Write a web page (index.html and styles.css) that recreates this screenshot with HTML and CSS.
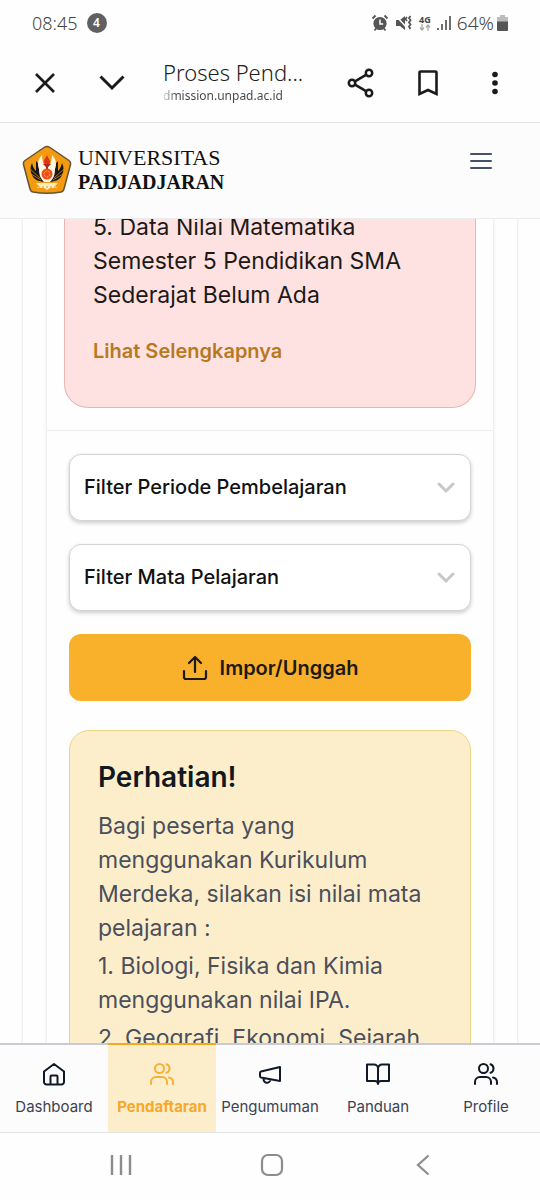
FILE: index.html
```html
<!DOCTYPE html>
<html lang="id">
<head>
    <meta charset="UTF-8">
    <meta name="viewport" content="width=device-width, initial-scale=1.0">
    <title>Proses Pendaftaran</title>
    <link rel="stylesheet" href="styles.css">
</head>
<body>
    <div class="phone">
        <div class="status-bar">
            <span class="clock">08:45</span>
            <span class="count">4</span>
            <div class="status-icons">
                <svg width="18" height="18" viewBox="0 0 18 18">
                    <circle cx="9" cy="9.5" r="6.6" fill="#555"/>
                    <path d="M9 5.5v4.5h3.2" fill="none" stroke="#fff" stroke-width="1.5"/>
                    <path d="M1.5 4.5l3-3M16.5 4.5l-3-3M3.5 16.5l1.5-2M14.5 16.5l-1.5-2" stroke="#555" stroke-width="1.8"/>
                </svg>
                <svg width="18" height="18" viewBox="0 0 18 18">
                    <path d="M1 6h4l5-4v14l-5-4H1z" fill="#555"/>
                    <path d="M1 2l13 14" stroke="#fff" stroke-width="1.5"/>
                    <path d="M12 3l-1.5 2 1.5 2M15.500 2l-1.500 2 1.500 2-1.500 2.500 1.500 2-1.500 2 1.500 2.500" fill="none" stroke="#555" stroke-width="1.8"/>
                </svg>
                <span class="network">
                    <span>4G</span>
                    <svg width="12" height="7" viewBox="0 0 12 7" fill="none" stroke="#aaa" stroke-width="1.3">
                        <path d="M3 0v6M1 3.500l2 2.500 2-2.500M9 7V1M7 3.500L9 1l2 2.500"/>
                    </svg>
                </span>
                <svg width="14" height="16" viewBox="0 0 14 16" stroke="#555" stroke-width="1.7">
                    <path d="M1 13v2M5 9v6M9 5v10M13 1v14"/>
                </svg>
                <span class="battery">
                    64%
                    <svg width="11" height="16" viewBox="0 0 11 16">
                        <path d="M3 0h5v2h3v5H0V2h3z" fill="#bbb"/>
                        <path d="M0 6.500h11V15a1 1 0 0 1-1 1H1a1 1 0 0 1-1-1z" fill="#555"/>
                    </svg>
                </span>
            </div>
        </div>

        <div class="browser-bar">
            <button class="icon-button" aria-label="Tutup">
                <svg width="20" height="20" viewBox="0 0 20 20" fill="none" stroke="#1b1b1b" stroke-width="2.6"><path d="M1 1l18 18M19 1L1 19"/></svg>
            </button>
            <button class="icon-button" aria-label="Perkecil">
                <svg width="26" height="16" viewBox="0 0 26 16" fill="none" stroke="#1b1b1b" stroke-width="3"><path d="M1.5 1.5L13 13 24.5 1.5"/></svg>
            </button>
            <div class="page-info">
                <div class="page-title">Proses Pend...</div>
                <div class="page-url">dmission.unpad.ac.id</div>
            </div>
            <button class="icon-button" aria-label="Bagikan">
                <svg width="28" height="30" viewBox="0 0 28 30" fill="none" stroke="#1b1b1b" stroke-width="2.5">
                    <circle cx="5" cy="15" r="3.2"/><circle cx="22" cy="5" r="3.2"/><circle cx="22" cy="25" r="3.2"/>
                    <path d="M8 13.3l11-6.500M8 16.700l11 6.500"/>
                </svg>
            </button>
            <button class="icon-button" aria-label="Simpan">
                <svg width="20" height="26" viewBox="0 0 20 26" fill="none" stroke="#1b1b1b" stroke-width="2.6"><path d="M1.5 2.500a1 1 0 0 1 1-1h15a1 1 0 0 1 1 1V24L10 20 1.500 24z"/></svg>
            </button>
            <button class="icon-button" aria-label="Menu browser">
                <svg width="6" height="24" viewBox="0 0 6 24" fill="#1b1b1b"><circle cx="3" cy="3.5" r="2.8"/><circle cx="3" cy="12" r="2.8"/><circle cx="3" cy="20.5" r="2.8"/></svg>
            </button>
        </div>

        <header class="site-header">
            <a class="brand" href="#">
                <svg width="50" height="50" viewBox="0 0 50 50">
                    <path d="M25 1.500q1.500 0 3 1L47 15.500q2 1.500 1.500 4L42 44q-.7 2.500-3 3-14 2.500-28 0-2.300-.5-3-3L1.500 19.500Q1 17 3 15.500L22 2.500q1.500-1 3-1z" fill="#f39a10" stroke="#665331" stroke-width="1.5"/>
                    <path d="M24 37c-6 0-12-2-14-7-2-4-2-8 0-12 1 4 2 6 4 8V16c4 4 5 7 5 11l5 7zM26 37c6 0 12-2 14-7 2-4 2-8 0-12-1 4-2 6-4 8V16c-4 4-5 7-5 11l-5 7z" fill="#171717"/>
                    <path d="M8 24l10 9M9 29l10 6M42 24l-10 9M41 29l-10 6" stroke="#f39a10" stroke-width=".7"/>
                    <path d="M20 10c-4 4-5 9-3 14 0 5 1 9 5 13h6c4-4 5-8 5-13 2-5 1-10-3-14 0 4-1 7-2 10h-6c-1-3-2-6-2-10z" fill="#fff6df"/>
                    <path d="M14 38h22l-3 3 2 2h-7l-3 2-3-2h-7l2-2z" fill="#ffedc2"/>
                    <path d="M16 42h18" stroke="#f39a10" stroke-width="1" stroke-dasharray="2 2"/>
                    <path d="M25 10c-1 3-4 5-3 8 1 2 5 2 6 0 1-3-2-4-3-8z" fill="#e43216"/>
                    <path d="M21 19h8l-3 3v12h-2V22z" fill="#a92a18"/>
                    <circle cx="25" cy="29" r="5.5" fill="#ef4b1c"/>
                    <circle cx="25" cy="29" r="3" fill="none" stroke="#ffb23a" stroke-width="1" stroke-dasharray="2 1"/>
                </svg>
                <span class="brand-name">
                    <span class="brand-top">UNIVERSITAS</span>
                    <strong class="brand-bottom">PADJADJARAN</strong>
                </span>
            </a>
            <button class="icon-button" aria-label="Menu">
                <svg width="22" height="18" viewBox="0 0 22 18" stroke="#475069" stroke-width="2" stroke-linecap="round"><path d="M1 2h20M1 9h20M1 16h20"/></svg>
            </button>
        </header>

        <main class="content">
            <div class="outer-card">
                <div class="inner-card">
                    <section class="errors">
                        <div class="alert alert-danger">
                            <p>5. Data Nilai Matematika<br>Semester 5 Pendidikan SMA<br>Sederajat Belum Ada</p>
                            <a class="more" href="#">Lihat Selengkapnya</a>
                        </div>
                    </section>
                    <section class="filters">
                        <div class="select-box">
                            <select aria-label="Filter Periode Pembelajaran">
                                <option>Filter Periode Pembelajaran</option>
                            </select>
                            <svg width="18" height="12" viewBox="0 0 18 12" fill="none" stroke="#c8c8c8" stroke-width="3" stroke-linecap="round"><path d="M2 2l7 7 7-7"/></svg>
                        </div>
                        <div class="select-box">
                            <select aria-label="Filter Mata Pelajaran">
                                <option>Filter Mata Pelajaran</option>
                            </select>
                            <svg width="18" height="12" viewBox="0 0 18 12" fill="none" stroke="#c8c8c8" stroke-width="3" stroke-linecap="round"><path d="M2 2l7 7 7-7"/></svg>
                        </div>
                        <button class="import-button">
                            <svg width="26" height="26" viewBox="0 0 26 26" fill="none" stroke="#1c1917" stroke-width="2.2" stroke-linecap="round" stroke-linejoin="round"><path d="M13 17V2M7 8l6-6 6 6M2 16v6a2 2 0 0 0 2 2h18a2 2 0 0 0 2-2v-6"/></svg>
                            Impor/Unggah
                        </button>
                        <div class="alert alert-warning">
                            <h2>Perhatian!</h2>
                            <p>Bagi peserta yang<br>menggunakan Kurikulum<br>Merdeka, silakan isi nilai mata<br>pelajaran :</p>
                            <p>1. Biologi, Fisika dan Kimia<br>menggunakan nilai IPA.</p>
                            <p>2. Geografi, Ekonomi, Sejarah</p>
                        </div>
                    </section>
                </div>
            </div>
        </main>

        <nav class="tabs">
            <a class="tab" href="#">
                <svg width="26" height="26" viewBox="0 0 26 26"><path d="M3 10.500L13 3l10 7.500V21a2.500 2.500 0 0 1-2.500 2.500h-15A2.500 2.500 0 0 1 3 21zM9.500 23.500v-8a1 1 0 0 1 1-1h5a1 1 0 0 1 1 1v8"/></svg>
                Dashboard
            </a>
            <a class="tab active" href="#">
                <svg width="26" height="26" viewBox="0 0 26 26"><circle cx="10.5" cy="7.5" r="4.5"/><path d="M2 23v-2a5 5 0 0 1 5-5h6a5 5 0 0 1 5 5v2M17.500 3.300a4.500 4.500 0 0 1 0 8.500M20 16.500a5 5 0 0 1 4 5V23"/></svg>
                Pendaftaran
            </a>
            <a class="tab" href="#">
                <svg width="26" height="26" viewBox="0 0 26 26"><path d="M23 6v14L4 16.500a1.500 1.500 0 0 1-1-1.500v-3a1.500 1.500 0 0 1 1-1.500zM13.500 18.500a3.500 3.500 0 1 1-6.800-1.400"/></svg>
                Pengumuman
            </a>
            <a class="tab" href="#">
                <svg width="26" height="26" viewBox="0 0 26 26"><path d="M2 3.500h7a4 4 0 0 1 4 4V23a3 3 0 0 0-3-3H2zM24 3.500h-7a4 4 0 0 0-4 4V23a3 3 0 0 1 3-3h8z"/></svg>
                Panduan
            </a>
            <a class="tab" href="#">
                <svg width="26" height="26" viewBox="0 0 26 26"><circle cx="10.5" cy="7.5" r="4.5"/><path d="M2 23v-2a5 5 0 0 1 5-5h6a5 5 0 0 1 5 5v2M17.500 3.300a4.500 4.500 0 0 1 0 8.500M20 16.500a5 5 0 0 1 4 5V23"/></svg>
                Profile
            </a>
        </nav>

        <div class="system-nav">
            <button class="icon-button" aria-label="Aplikasi terbaru">
                <svg width="22" height="22" viewBox="0 0 22 22" stroke="#8c8c8c" stroke-width="2.4"><path d="M2 1v20M11 1v20M20 1v20"/></svg>
            </button>
            <button class="icon-button" aria-label="Beranda">
                <svg width="24" height="24" viewBox="0 0 24 24" fill="none" stroke="#8c8c8c" stroke-width="2.2"><rect x="2" y="2" width="20" height="20" rx="6"/></svg>
            </button>
            <button class="icon-button" aria-label="Kembali">
                <svg width="14" height="22" viewBox="0 0 14 22" fill="none" stroke="#8c8c8c" stroke-width="2.2"><path d="M12.500 1.500L2 11l10.500 9.500"/></svg>
            </button>
        </div>
    </div>
</body>
</html>
```
FILE: styles.css
```css
* {
    margin: 0;
    padding: 0;
    box-sizing: border-box;
}
body {
    font-family: Inter, "Liberation Sans", sans-serif;
    font-size: 23px;
    line-height: 34px;
    color: #1c1917;
    background: #fefefe;
}
a {
    color: inherit;
    text-decoration: none;
}
svg {
    display: block;
    flex: none;
}
.phone {
    display: flex;
    flex-direction: column;
    height: 100vh;
    overflow: hidden;
}
.icon-button {
    display: flex;
    align-items: center;
    justify-content: center;
    width: 48px;
    height: 48px;
    flex: none;
    border: none;
    background: none;
    cursor: pointer;
}

/* status bar */
.status-bar {
    display: flex;
    align-items: center;
    gap: 9px;
    height: 46px;
    padding: 0 32px;
    font-family: "Noto Sans", sans-serif;
    font-size: 18px;
    font-weight: 300;
    line-height: 24px;
    color: #444;
}
.count {
    width: 20px;
    height: 20px;
    border-radius: 50%;
    background: #606060;
    color: #fff;
    font-size: 12px;
    font-weight: 600;
    line-height: 20px;
    text-align: center;
}
.status-icons {
    display: flex;
    align-items: center;
    gap: 6px;
    margin-left: auto;
}
.network {
    display: flex;
    flex-direction: column;
    align-items: center;
    font-size: 9px;
    font-weight: 700;
    line-height: 9px;
}
.battery {
    display: flex;
    align-items: center;
    gap: 3px;
    font-size: 19px;
}

/* browser toolbar */
.browser-bar {
    display: flex;
    align-items: center;
    gap: 19px;
    height: 77px;
    padding: 0 21px 2px;
    border-bottom: 1px solid #dfe3e8;
    font-family: "Noto Sans", sans-serif;
    color: #222;
}
.page-info {
    flex: 1;
    min-width: 0;
    white-space: nowrap;
    padding-left: 8px;
}
.page-title {
    font-size: 22px;
    font-weight: 300;
    line-height: 26px;
}
.page-url {
    font-size: 12px;
    line-height: 22px;
    background: linear-gradient(90deg, #ddd, #444 14px);
    background-clip: text;
    color: transparent;
}

/* site header */
.site-header {
    display: flex;
    align-items: flex-start;
    justify-content: space-between;
    height: 96px;
    padding: 14px 35px 0 22px;
    border-bottom: 1px solid #ececee;
    background: #fcfcfd;
}
.brand {
    display: flex;
    align-items: center;
    gap: 6px;
    padding-top: 8px;
}
.brand-name {
    display: flex;
    flex-direction: column;
    font-family: "Liberation Serif", serif;
    line-height: 24px;
    color: #111;
}
.brand-top {
    font-size: 22px;
}
.brand-bottom {
    font-size: 20px;
}

/* scrolled content */
.content {
    flex: 1;
    min-height: 0;
    padding: 0 22px;
    overflow: hidden;
}
.outer-card {
    padding: 0 23px;
    border: 1px solid #f0f0f0;
    border-width: 0 1px;
    box-shadow: 0 0 3px #f4f4f4;
}
.inner-card {
    border: 1px solid #f0f0f0;
    border-width: 0 1px;
    box-shadow: 0 0 4px #f0f0f0;
}
.errors {
    margin-top: -9px;
    padding: 0 17px 22px;
    border-bottom: 1px solid #eee;
}
.alert {
    padding: 28px;
    border: 1px solid;
    border-radius: 20px;
}
.alert-danger {
    padding-top: 0;
    padding-bottom: 39px;
    border-color: #e9b4b4;
    border-top: none;
    border-radius: 0 0 24px 24px;
    background: #fee2e2;
}
.more {
    display: block;
    margin-top: 22px;
    font-size: 20px;
    font-weight: 600;
    color: #b7791f;
}
.filters {
    display: flex;
    flex-direction: column;
    gap: 23px;
    padding: 23px 22px;
}
.select-box {
    display: grid;
    align-items: center;
}
.select-box select,
.select-box svg {
    grid-area: 1 / 1;
}
.select-box svg {
    justify-self: end;
    margin-right: 16px;
    pointer-events: none;
}
.select-box select {
    appearance: none;
    width: 100%;
    height: 67px;
    padding: 0 48px 2px 14px;
    border: 1px solid #d4d4d4;
    border-radius: 12px;
    background: #fff;
    box-shadow: 0 2px 4px rgba(0, 0, 0, 0.2);
    font: 500 20px Inter, "Liberation Sans", sans-serif;
    color: #111;
}
.import-button {
    display: flex;
    align-items: center;
    justify-content: center;
    gap: 12px;
    height: 67px;
    border: none;
    border-radius: 12px;
    background: #f9b02a;
    font: 600 20px Inter, "Liberation Sans", sans-serif;
    color: #1c1917;
    cursor: pointer;
}
.alert-warning {
    margin-top: 6px;
    border-color: #ecd582;
    background: #fdeecb;
    color: #4b4f5c;
}
.alert-warning h2 {
    margin-bottom: 14px;
    font-size: 28px;
    font-weight: 600;
    line-height: 36px;
    color: #111820;
}
.alert-warning p {
    margin-bottom: 4px;
}

/* bottom tabs */
.tabs {
    display: flex;
    height: 90px;
    border-bottom: 1px solid #e4e4e6;
    background: #fcfcfd;
}
.tab {
    display: flex;
    flex: 1;
    flex-direction: column;
    align-items: center;
    gap: 10px;
    padding-top: 16px;
    border-top: 2px solid #c9cad2;
    font-size: 15px;
    line-height: 20px;
    color: #3c4250;
}
.tab svg {
    fill: none;
    stroke: #111827;
    stroke-width: 2;
    stroke-linecap: round;
    stroke-linejoin: round;
}
.tab.active {
    border-color: #f5a623;
    background: #fdeecb;
    font-weight: 700;
    color: #f5a92a;
}
.tab.active svg {
    stroke: #f5b13a;
}

/* system navigation */
.system-nav {
    display: flex;
    align-items: center;
    justify-content: space-between;
    height: 67px;
    padding: 0 93px 4px 97px;
}
```
